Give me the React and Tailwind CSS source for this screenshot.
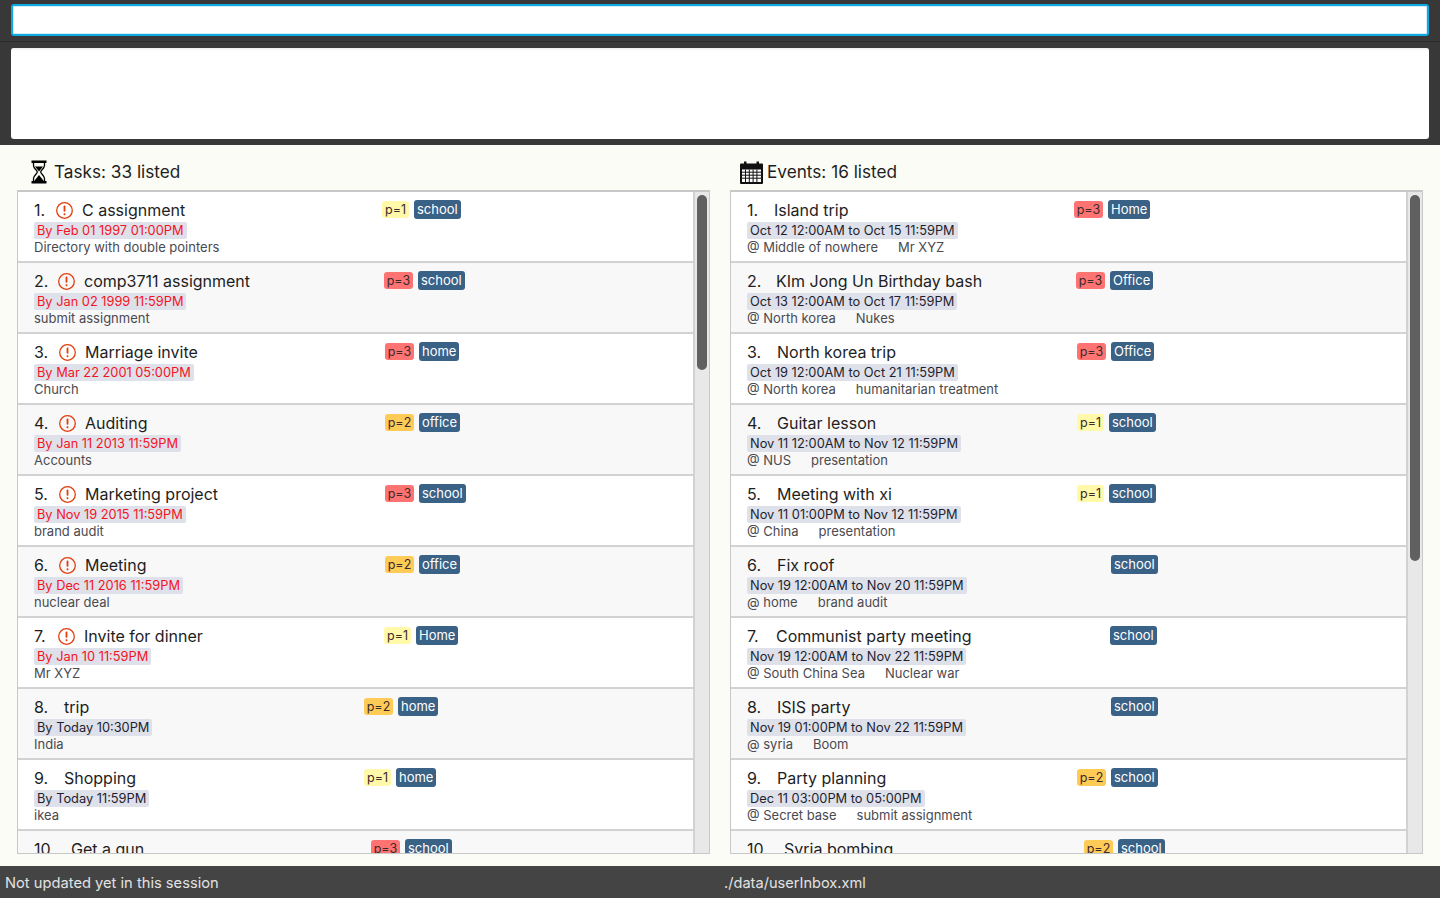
const tasks = [
  { n: '1.', num: 'w-[22px]', title: 'C assignment', date: 'By Feb 01 1997 01:00PM', desc: 'Directory with double pointers', p: 1, tag: 'school', late: true, left: 'w-[348px]' },
  { n: '2.', num: 'w-[24px]', title: 'comp3711 assignment', date: 'By Jan 02 1999 11:59PM', desc: 'submit assignment', p: 3, tag: 'school', late: true, left: 'w-[350px]' },
  { n: '3.', num: 'w-[25px]', title: 'Marriage invite', date: 'By Mar 22 2001 05:00PM', desc: 'Church', p: 3, tag: 'home', late: true, left: 'w-[351px]' },
  { n: '4.', num: 'w-[25px]', title: 'Auditing', date: 'By Jan 11 2013 11:59PM', desc: 'Accounts', p: 2, tag: 'office', late: true, left: 'w-[351px]' },
  { n: '5.', num: 'w-[25px]', title: 'Marketing project', date: 'By Nov 19 2015 11:59PM', desc: 'brand audit', p: 3, tag: 'school', late: true, left: 'w-[351px]' },
  { n: '6.', num: 'w-[25px]', title: 'Meeting', date: 'By Dec 11 2016 11:59PM', desc: 'nuclear deal', p: 2, tag: 'office', late: true, left: 'w-[351px]' },
  { n: '7.', num: 'w-[24px]', title: 'Invite for dinner', date: 'By Jan 10 11:59PM', desc: 'Mr XYZ', p: 1, tag: 'Home', late: true, left: 'w-[350px]' },
  { n: '8.', num: 'w-[30px]', title: 'trip', date: 'By Today 10:30PM', desc: 'India', p: 2, tag: 'home', left: 'w-[330px]' },
  { n: '9.', num: 'w-[30px]', title: 'Shopping', date: 'By Today 11:59PM', desc: 'ikea', p: 1, tag: 'home', left: 'w-[330px]' },
  { n: '10.', num: 'w-[37px]', title: 'Get a gun', p: 3, tag: 'school', left: 'w-[337px]' },
];

const events = [
  { n: '1.', num: 'w-[27px]', title: 'Island trip', date: 'Oct 12 12:00AM to Oct 15 11:59PM', desc: '@ Middle of nowhere', note: 'Mr XYZ', p: 3, tag: 'Home', left: 'w-[327px]' },
  { n: '2.', num: 'w-[29px]', title: 'KIm Jong Un Birthday bash', date: 'Oct 13 12:00AM to Oct 17 11:59PM', desc: '@ North korea', note: 'Nukes', p: 3, tag: 'Office', left: 'w-[329px]' },
  { n: '3.', num: 'w-[30px]', title: 'North korea trip', date: 'Oct 19 12:00AM to Oct 21 11:59PM', desc: '@ North korea', note: 'humanitarian treatment', p: 3, tag: 'Office', left: 'w-[330px]' },
  { n: '4.', num: 'w-[30px]', title: 'Guitar lesson', date: 'Nov 11 12:00AM to Nov 12 11:59PM', desc: '@ NUS', note: 'presentation', p: 1, tag: 'school', left: 'w-[330px]' },
  { n: '5.', num: 'w-[30px]', title: 'Meeting with xi', date: 'Nov 11 01:00PM to Nov 12 11:59PM', desc: '@ China', note: 'presentation', p: 1, tag: 'school', left: 'w-[330px]' },
  { n: '6.', num: 'w-[30px]', title: 'Fix roof', date: 'Nov 19 12:00AM to Nov 20 11:59PM', desc: '@ home', note: 'brand audit', tag: 'school', left: 'w-[364px]' },
  { n: '7.', num: 'w-[29px]', title: 'Communist party meeting', date: 'Nov 19 12:00AM to Nov 22 11:59PM', desc: '@ South China Sea', note: 'Nuclear war', tag: 'school', left: 'w-[363px]' },
  { n: '8.', num: 'w-[30px]', title: 'ISIS party', date: 'Nov 19 01:00PM to Nov 22 11:59PM', desc: '@ syria', note: 'Boom', tag: 'school', left: 'w-[364px]' },
  { n: '9.', num: 'w-[30px]', title: 'Party planning', date: 'Dec 11 03:00PM to 05:00PM', desc: '@ Secret base', note: 'submit assignment', p: 2, tag: 'school', left: 'w-[330px]' },
  { n: '10.', num: 'w-[37px]', title: 'Syria bombing', p: 2, tag: 'school', left: 'w-[337px]' },
];

const priorityStyles = {
  1: 'w-[27px] bg-[#fff9a9]',
  2: 'w-[29px] bg-[#ffcb57]',
  3: 'w-[29px] bg-[#ff7373]',
};

const Hourglass = () => (
  <svg width="16" height="24" viewBox="0 0 16 24" className="shrink-0">
    <path d="M0.5 0.5h15v2.5h-15z M0.5 21h15v2.5h-15z" fill="#000" />
    <path d="M2.5 3v2.5c0 3 3.8 4.6 3.8 6.5s-3.8 3.500-3.800 6.500v2.500M13.500 3v2.500c0 3-3.800 4.600-3.800 6.500s3.800 3.500 3.800 6.500v2.500" fill="none" stroke="#000" strokeWidth="1.3" />
    <path d="M4 6.500h8l-4 5zM8 15l4.800 6h-9.600z" fill="#000" />
  </svg>
);

const Calendar = () => (
  <svg width="23" height="23" viewBox="0 0 23 23" className="shrink-0">
    <path d="M0 3.500a1 1 0 0 1 1-1h21a1 1 0 0 1 1 1v18.500a1 1 0 0 1-1 1h-21a1 1 0 0 1-1-1z" fill="#111" />
    <rect x="4" y="0.500" width="2.500" height="3.500" fill="#111" />
    <rect x="16.500" y="0.500" width="2.500" height="3.500" fill="#111" />
    <path d="M2 8.500h19v12.500h-19z" fill="#fff" />
    <path d="M2 11.200h19M2 14.200h19M2 17.200h19M5.500 8.500v12.500M9.300 8.500v12.500M13.100 8.500v12.500M16.900 8.500v12.500" stroke="#111" strokeWidth="1" />
  </svg>
);

const Overdue = () => (
  <svg width="17" height="17" viewBox="0 0 17 17" className="shrink-0">
    <circle cx="8.500" cy="8.500" r="7.800" fill="none" stroke="#e23d0b" strokeWidth="1.300" />
    <rect x="7.600" y="3.600" width="1.800" height="6.200" rx="0.800" fill="#e23d0b" />
    <rect x="7.600" y="11.200" width="1.800" height="2" rx="0.600" fill="#e23d0b" />
  </svg>
);

const Row = ({ item, odd }) => (
  <div className={`h-[71px] shrink-0 border-b-2 border-[#d2d2d2] pl-[16px] ${odd ? 'bg-white' : 'bg-[#f8f8f8]'}`}>
    <div className="flex">
      <div className={`${item.left} shrink-0`}>
        <div className="flex h-[30px] items-center pt-[6px] text-[16px] leading-[22px] text-[#1e1e1e]">
          <span className={`${item.num} shrink-0`}>{item.n}</span>
          {item.late && (
            <span className="mr-[9px] shrink-0"><Overdue /></span>
          )}
          <span className="whitespace-nowrap">{item.title}</span>
        </div>
      </div>
      <div className="flex items-center gap-[5px] pt-[5px] text-[13px] leading-[17px]">
        {item.p && (
          <span className={`rounded-[3px] text-center text-[12.500px] text-[#3a2a2a] ${priorityStyles[item.p]}`}>p={item.p}</span>
        )}
        <span className="rounded-[3px] bg-[#3a6186] px-[3px] py-[1px] text-white">{item.tag}</span>
      </div>
    </div>
    {item.date && (
      <div className="flex">
        <span className={`rounded-[2px] bg-[#dee1ea] px-[3px] text-[12.800px] leading-[17px] ${item.late ? 'text-[#f5131f]' : 'text-[#1e1e2e]'}`}>{item.date}</span>
      </div>
    )}
    {item.desc && (
      <div className="flex text-[13px] leading-[17px] text-[#4a4a4f]">
        <span>{item.desc}</span>
        {item.note && <span className="ml-[20px]">{item.note}</span>}
      </div>
    )}
  </div>
);

const ListPanel = ({ items, thumb }) => (
  <div className="flex h-[664px] w-[693px] overflow-hidden border border-[#c8c8c8] border-t-2">
    <div className="min-w-0 flex-1">
      {items.map((item, i) => (
        <Row key={item.n} item={item} odd={i % 2 === 0} />
      ))}
    </div>
    <div className="w-[16px] shrink-0 border-l-2 border-[#d2d2d2] bg-[#e8e8e8] pt-[3px] pl-[2px]">
      <div className={`w-[10px] rounded-[5px] bg-[#606060] ${thumb}`} />
    </div>
  </div>
);

export default function App() {
  return (
    <div className="flex h-[898px] w-[1440px] flex-col overflow-hidden bg-[#fbfcf6] font-['Inter',sans-serif]">
      <div className="h-[41px] shrink-0 bg-[#383838] px-[11px] pt-[4px]">
        <div className="h-[32px] rounded-[3px] border-2 border-[#10a8e0] bg-white shadow-[inset_0_0_0_1px_#d8eef8]" />
      </div>
      <div className="h-[1px] shrink-0 bg-[#2b2b2b]" />
      <div className="h-[103px] shrink-0 bg-[#383838] px-[11px] pt-[6px]">
        <div className="h-[91px] rounded-[3px] bg-white shadow-[inset_0_3px_3px_-2px_#e8e8e8]" />
      </div>

      <div className="flex min-h-0 flex-1 gap-[20px] pl-[17px]">
        <div>
          <div className="flex h-[45px] items-center gap-[7px] pt-[9px] pl-[14px] text-[17.200px] text-[#1e1e1e]">
            <Hourglass />
            <span>Tasks: 33 listed</span>
          </div>
          <ListPanel items={tasks} thumb="h-[175px]" />
        </div>
        <div>
          <div className="flex h-[45px] items-center gap-[4px] pt-[9px] pl-[10px] text-[17.200px] text-[#1e1e1e]">
            <Calendar />
            <span>Events: 16 listed</span>
          </div>
          <ListPanel items={events} thumb="h-[366px]" />
        </div>
      </div>

      <div className="flex h-[32px] shrink-0 items-center bg-[#444444] pt-[3px] text-[14.700px] text-[#e2e2e2]">
        <span className="w-[720px] shrink-0 pl-[5px]">Not updated yet in this session</span>
        <span className="pl-[4px] text-[14.600px]">./data/userInbox.xml</span>
      </div>
    </div>
  );
}
